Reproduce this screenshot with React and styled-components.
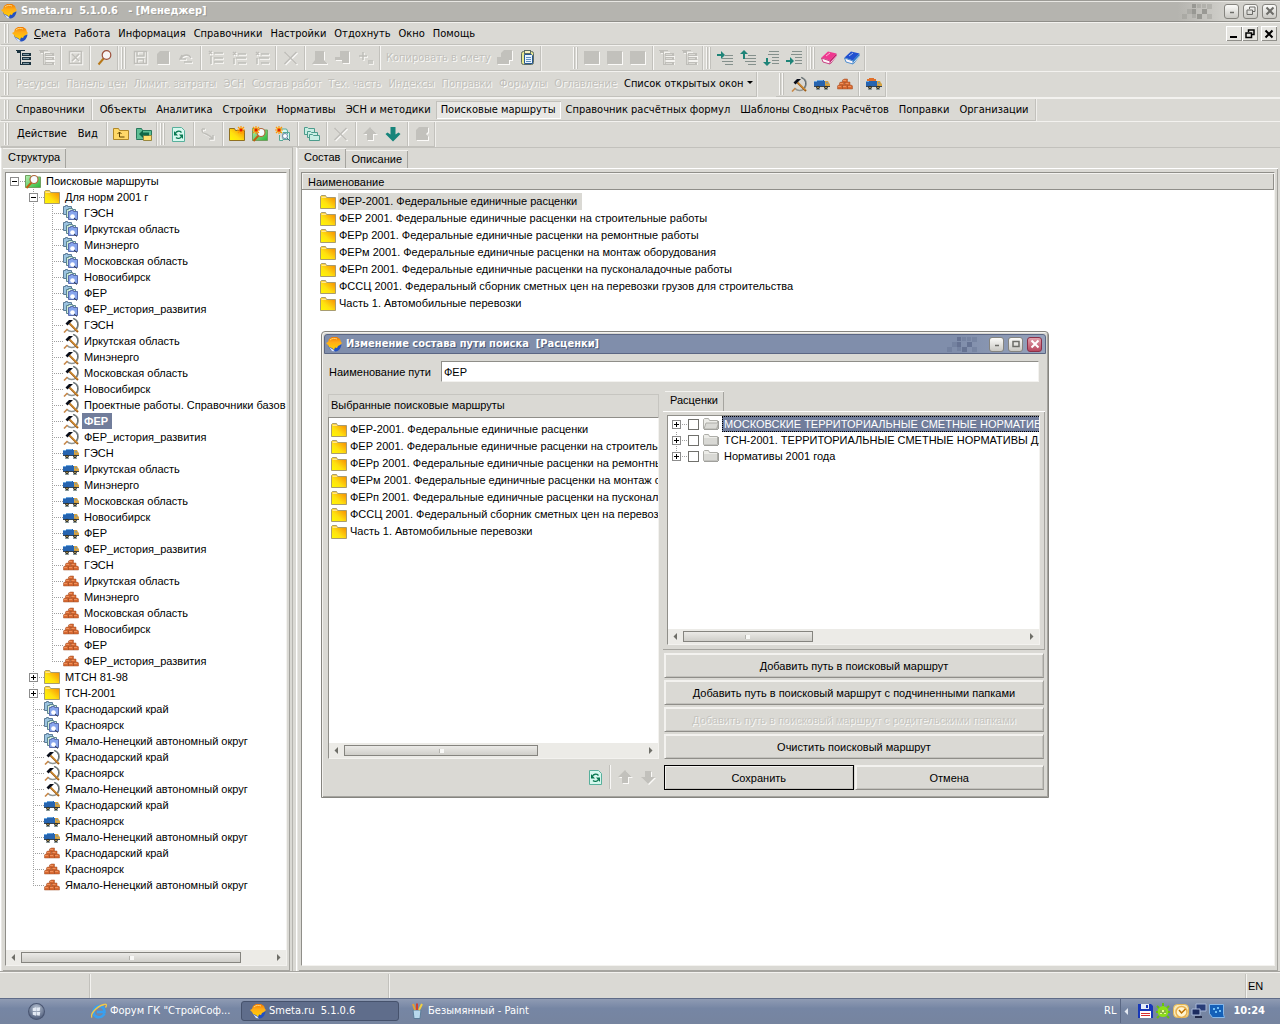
import React from "react";
import styled, { createGlobalStyle, css } from "styled-components";

const face = "#dad9d4";
const uiFont = '"DejaVu Sans Condensed", "DejaVu Sans", sans-serif';
const listFont = '"Liberation Sans", Arial, sans-serif';

const GlobalStyle = createGlobalStyle`
  * { box-sizing: border-box; }
  body { margin: 0; background: ${face}; font: 11px/16px ${uiFont}; color: #000; }
  button, input { font: inherit; color: inherit; margin: 0; padding: 0; }
  ul { list-style: none; margin: 0; padding: 0; }
  svg { display: block; flex: none; }
`;

/* ---------- drawings ---------- */

const Glyph = ({ size = 16, children }) => (
  <svg width={size} height={size} viewBox="0 0 16 16" aria-hidden="true">{children}</svg>
);

const Defs = () => (
  <HiddenSvg width="0" height="0" aria-hidden="true">
    <defs>
      <linearGradient id="gold" x1="0" y1="1" x2="1" y2="0">
        <stop offset="0" stopColor="#fffa00" /><stop offset="0.4" stopColor="#ffe010" /><stop offset="1" stopColor="#f48000" />
      </linearGradient>
      <linearGradient id="sun" x1="0" y1="0" x2="0" y2="1">
        <stop offset="0" stopColor="#f07800" /><stop offset="0.4" stopColor="#ffac18" /><stop offset="1" stopColor="#ffd400" />
      </linearGradient>
      <linearGradient id="green" x1="0" y1="0" x2="1" y2="1">
        <stop offset="0" stopColor="#b8eeb0" /><stop offset="1" stopColor="#28b838" />
      </linearGradient>
      <radialGradient id="orb" cx="0.5" cy="0.3" r="0.7">
        <stop offset="0" stopColor="#b9c4d4" /><stop offset="1" stopColor="#4c5a78" />
      </radialGradient>
    </defs>
  </HiddenSvg>
);

const Logo = () => (
  <Glyph>
    <path d="M2 9c1 4 4 6.500 7.500 6.500c3.500-.5 5.500-3.500 6-7z" fill="#2450c0" />
    <path d="M3 11l4 2.500 2 2-3-.5z" fill="#dce8ff" />
    <path d="M0 7l2-1 1-3 3-2h5l3 2 1 3 1 1-2 2-2 1-1 2-2-.5L8 14l-2-2-3-1-1-2z" fill="url(#sun)" />
    <path d="M4 4c2-2 5-2 7-1" stroke="#ffd878" fill="none" />
  </Glyph>
);
const Folder = () => (
  <Glyph>
    <path d="M0.500 14.500V2.500l1-1h4l1 2h9v11z" fill="url(#gold)" stroke="#a89c70" />
    <path d="M1.500 4V2.500h4L6.500 4z" fill="#ffe68c" />
  </Glyph>
);
const GreyFolder = ({ open }) => (
  <Glyph>
    <path d="M0.500 12.500V3.500l1-1h4l1 2h8v8z" fill="#ecece8" stroke="#aeaea9" />
    <path d={open ? "M3 7h12.500l-2 6H1z" : "M1 6h13v6.500H1z"} fill="#d9d9d5" stroke={open ? "#aeaea9" : "none"} />
    <path d="M1 13.500h14M15.500 5v8" stroke="#a0a09c" />
  </Glyph>
);
const Spark = ({ x, y }) => (
  <g stroke="#ff9a00" strokeWidth="1.200">
    <path d={`M${x - 4} ${y}h8M${x} ${y - 4}v8M${x - 3} ${y - 3}l6 6M${x + 3} ${y - 3}l-6 6`} />
    <circle cx={x} cy={y} r="1.500" fill="#e02000" stroke="none" />
  </g>
);
const SearchFolder = ({ spark }) => (
  <Glyph>
    <path d="M0.500 14.500V2.500h5l1 1.500h9v10.500z" fill="url(#green)" stroke="#70a060" />
    <path d="M6.500 9.500L1.500 15" stroke="#c06010" strokeWidth="2" />
    <circle cx="9" cy="6.500" r="4" fill="#f6fbff" stroke="#b0683a" strokeWidth="1.200" />
    {spark && <Spark x={4} y={4} />}
  </Glyph>
);
const Stack = () => (
  <Glyph>
    <path d="M0.500 9.500v-8h2v-1h2v1h4v8z" fill="#9cc4e0" stroke="#5c7c98" />
    <path d="M3.500 12.500v-8h2v-1h4v1h3v8z" fill="#d0ecd8" stroke="#5c8490" />
    <path d="M5.500 14.500v-8h2v-1h3v1h4v8z" fill="#86a4ec" stroke="#5a6cac" />
    <circle cx="9.500" cy="11.500" r="2.300" fill="#fff" />
    <path d="M11 13l3 2.500" stroke="#303848" />
  </Glyph>
);
const Hammer = () => (
  <Glyph>
    <path d="M10 1.500c4 1 5.500 4 5 7.500c-.6 4-4 5.500-6.500 5.500c-2 0-3.500-1-4.500-2" fill="none" stroke="#909694" strokeWidth="1.600" />
    <path d="M10.500 1.500c5 2 5 8 2 11" fill="none" stroke="#4c5860" strokeWidth="0.800" />
    <path d="M4.500 12L1 15.500" stroke="#c88848" strokeWidth="1.600" />
    <path d="M6.500 6.500L15 15" stroke="#a05c14" strokeWidth="2" />
    <path d="M6.500 6l8 8" stroke="#f4b850" strokeWidth="0.900" />
    <path d="M2.500 6.500L6 3h4L5.500 7.500l-1 1z" fill="#080c18" />
  </Glyph>
);
const Truck = ({ loaded }) => (
  <Glyph>
    <path d="M0 5h3v-1h7v1h1v5H0z" fill="#2664b0" />
    <path d="M0 5.500h3M3 4.500h6" stroke="#6ca8e0" />
    {loaded && <path d="M1 5V3h2V2h5v1h2v2z" fill="#e0702a" />}
    <path d="M11 10V5h3l1 2 1 1v3h-5z" fill="#d8a440" />
    <path d="M12 6h1.500l1 1.500H12z" fill="#7c98a8" />
    <path d="M0 10.500h16" stroke="#384450" />
    <path d="M2 13.500h4M10 13.500h4" stroke="#90a0a0" />
    <circle cx="4" cy="11.500" r="1.800" fill="#282828" /><circle cx="12" cy="11.500" r="1.800" fill="#282828" />
    <circle cx="4" cy="11.500" r="0.700" fill="#f0d060" /><circle cx="12" cy="11.500" r="0.700" fill="#f0d060" />
  </Glyph>
);
const Bricks = () => (
  <Glyph>
    <g fill="#d86830" stroke="#a05028" strokeWidth="0.500">
      <path d="M5.500 4l2-1h3v3l-1 1h-4z" />
      <path d="M2.500 7l1-1h4v4h-5zM8 7l1-1h4v4H8z" />
      <path d="M0.500 10l1-1h4v4h-5zM5.500 10l1-1h4v4h-5zM10.500 10l1-1h3l1 1v3h-5z" />
    </g>
    <path d="M6 4.500h3M3 7.500h3M8.500 7.500h3M1 10.500h3M6 10.500h3M11 10.500h3" stroke="#f49c68" strokeWidth="0.800" />
  </Glyph>
);
const Tree = ({ off }) => {
  const c = off ? "#bfbeb9" : "#1c3440";
  return (
    <Glyph>
      <g shapeRendering="crispEdges">
        {off && <path d="M2 2h9v2H2zM7 6h9v3H7zM7 10h9v2H7zM7 13h9v2H7z" fill="#f4f3f0" />}
        <path d="M0 0h9v1H5v13h2v1H4V3H1V1H0z" fill={c} />
        <path d="M6 3h9v3H6zM6 7h9v3H6zM6 12h9v3H6z" fill={c} />
        <path d="M7 4h6v1H7zM7 8h6v1H7zM7 13h6v1H7z" fill={off ? face : "#7e98a4"} />
      </g>
    </Glyph>
  );
};
const GreyShape = ({ d, line }) => (
  <Glyph>
    <g transform="translate(1 1)" fill={line ? "none" : "#fbfaf8"} stroke={line ? "#fbfaf8" : "none"} strokeWidth="1.500"><path d={d} /></g>
    <g fill={line ? "none" : "#c2c1bc"} stroke={line ? "#bfbeb9" : "none"} strokeWidth="1.500"><path d={d} /></g>
  </Glyph>
);
const grey = {
  excel: ["M1.500 1.500h12v12h-12zM4 4l7 7M11 4l-7 7", true],
  save: ["M1.500 1.500h12v12h-12zM4 2v4h7V2M4.500 13V9h6v4", true],
  doc: ["M1 4l3-3h9v13H1z"],
  undo: ["M3 5l-2 4h6M2 8c3-4 8-4 10 0M5 12h8", true],
  rows: ["M1 1l3 3M1 4l3-3M6 3h9M3 6v8M6 8h9M6 12h9", true],
  rows2: ["M2 2l3 3M2 5l3-3M7 4h8M5 8h10M3 8v6M7 13h8", true],
  cross: ["M1.500 2l12 12M13.500 2l-12 12", true],
  person: ["M3 1h9v9l3 3v1H0l3-4z"],
  person2: ["M5 1h9v12H7v-3H0V7h5z"],
  plusman: ["M5 2v8M1 6h8M10 11h5M10 13h5", true],
  copy: ["M0 7h4V3l3-3h8v10h-3v4H0z"],
  box: ["M0 1h15v13H0z"],
  up: ["M8 1l7 7h-4v6H5V8H1z"],
  down: ["M8 15l7-7h-4V2H5v6H1z"],
  link: ["M2 3c0 5 2 4 4 5s5 2 7 5M9 13h4V9M2 3h3", true],
  exit: ["M2 4l3-3h9v5l-2 2 2 2v4H2z"],
};
const Grey = ({ k }) => <GreyShape d={grey[k][0]} line={grey[k][1]} />;
const Magnifier = () => (
  <Glyph>
    <path d="M7 8L1.500 14.500" stroke="#b87818" strokeWidth="2" />
    <circle cx="9.500" cy="5" r="4.300" fill="#f7f4f4" stroke="#9c503c" strokeWidth="1.200" />
  </Glyph>
);
const Clipboard = () => (
  <Glyph>
    <rect x="1.500" y="1.500" width="12" height="13" rx="2" fill="#e8e890" stroke="#5c6c64" />
    <rect x="4.500" y="0.500" width="6" height="3" fill="#f4f0c0" stroke="#5c6c64" />
    <path d="M4.500 4.500h7l1 1v8h-8z" fill="#e8f4ff" stroke="#285890" />
    <path d="M6 7.500h5M6 9.500h5M6 11.500h5" stroke="#6090c0" />
  </Glyph>
);
const Indent = ({ mode }) => {
  const arrow = {
    right: "M0 4h4V1l4 4-4 4V6H0z", up: "M4 0l4 4H5v5H3V4H0z",
    down: "M4 16l-4-4h3V8h2v4h3z", low: "M0 10h4V7l4 4-4 4v-3H0z",
  }[mode];
  const upper = mode === "right" || mode === "up";
  return (
    <Glyph>
      <path d={upper ? "M8 5.500h8M5 8.500h11M5 11.500h11M8 14.500h8" : "M6 1.500h10M5 4.500h11M9 7.500h7M9 10.500h7M9 13.500h7"} stroke="#84908c" />
      <path d={arrow} fill="#1e8478" />
    </Glyph>
  );
};
const Book = ({ top, side }) => (
  <Glyph>
    <path d="M0.500 7.500L7 1.500l8.500 2L9 10.500z" fill={top} />
    <path d="M0.500 8L9 11v3L2 12z" fill="#fcf4f8" stroke={side} strokeWidth="0.800" />
    <path d="M9 10.500l6.500-7v3L9.500 14z" fill={side} />
    <path d="M9.500 12.500l6-6.500" stroke="#fff" strokeWidth="0.800" />
    <path d="M5 6l4-3" stroke="#fff" opacity="0.600" />
  </Glyph>
);
const UpFolder = () => (
  <Glyph>
    <path d="M0.500 13.500v-11h5l1 2h9v9z" fill="#ffd868" stroke="#b08828" />
    <path d="M6.500 6v5h5M4.500 8l2-2 2 2" stroke="#604400" fill="none" />
  </Glyph>
);
const TreeFolder = () => (
  <Glyph>
    <path d="M0.500 12.500v-10h5l1 2h9v9h-15z" fill="#5fbf94" stroke="#28785c" />
    <path d="M7.500 9.500h8v5h-8z" fill="#ffe070" stroke="#988840" />
    <path d="M3 8l4-4v2.500h6v3H7V12z" fill="#0e6848" />
  </Glyph>
);
const Refresh = () => (
  <Glyph>
    <path d="M1.500 1.500h9l3 3v11h-12z" fill="#d6f8ee" stroke="#58b09c" />
    <path d="M4.500 7c1-2 4-2.500 6-.5M10.500 10.500c-1 2-4 2.500-5.500 1" stroke="#087850" fill="none" strokeWidth="1.300" />
    <path d="M3 5v4.500h4zM12 13V8.500H8z" fill="#087850" />
  </Glyph>
);
const NewFolder = () => (
  <Glyph>
    <path d="M0.500 14.500v-12h5l1 2h9v10z" fill="url(#gold)" stroke="#907020" />
    <Spark x={12} y={4} />
  </Glyph>
);
const NewStack = () => (
  <Glyph>
    <path d="M5.500 7v-4h6l1 2v3M8 14.500H4.500V9M8 6.500h6.500v7H8z" fill="#d8f8f0" stroke="#58a898" />
    <circle cx="10" cy="10" r="2.500" fill="#fff" stroke="#6888a8" /><path d="M12 12l3 3" stroke="#506880" />
    <Spark x={4} y={4} />
  </Glyph>
);
const Copies = () => (
  <Glyph>
    <g fill="#c8eee4" stroke="#4c9c8c">
      <path d="M0.500 8.500v-7h3l1 1h6v6z" /><path d="M3.500 11.500v-6h3l1 1h6v5z" /><path d="M5.500 14.500v-6h3l1 1h6v5z" />
    </g>
  </Glyph>
);
const DownArrow = () => <Glyph><path d="M8 15.500L0.500 8l2-1.500 3 2V1h5v7.500l3-2 2 1.500z" fill="#17857b" /></Glyph>;
const Dissolve = ({ tint }) => (
  <svg width="33" height="15" viewBox="0 0 33 15" shapeRendering="crispEdges" aria-hidden="true">
    <g fill={tint}>
      <path opacity="0.800" d="M13 0h4v4h-4zM13 5h4v5h-4zM23 5h5v5h-5zM18 10h5v5h-5z" />
      <path opacity="0.350" d="M8 5h5v5H8zM3 10h5v5H3zM13 10h4v4h-4zM23 0h4v4h-4zM28 0h5v5h-5zM28 10h5v5h-5zM18 0h4v4h-4z" />
    </g>
  </svg>
);
const IE = () => (
  <Glyph>
    <path d="M13.500 10.500C12 14 8 15 5 13.500S1.500 7 4.500 4.500s9-1.500 9 4.500H6" fill="none" stroke="#38a0f0" strokeWidth="2.600" />
    <path d="M1 14.500C-1 12 4 4 13 1.500c3-1 3 1 1.500 3" fill="none" stroke="#f0c848" strokeWidth="1.300" />
  </Glyph>
);
const Orb = () => (
  <Glyph size={17}>
    <circle cx="8" cy="8" r="7.500" fill="url(#orb)" stroke="#4a5672" />
    <path d="M4.500 5l3-1v3.500h-3zM8 4.500l3.500-.5-.5 3.500H8zM4.500 8.500h3V12l-3-1zM8 8.500h3.500L11 12l-3-.5z" fill="#e4eaf4" />
  </Glyph>
);
const Paint = () => (
  <Glyph>
    <path d="M4 7h8l-1 8.500H5z" fill="#b8d8ec" stroke="#5c7c98" />
    <path d="M6 7L4 1" stroke="#e8a030" strokeWidth="2" /><path d="M8 7V0.500" stroke="#d04030" strokeWidth="2" /><path d="M10 7l3-6" stroke="#f0d040" strokeWidth="2" />
  </Glyph>
);
const Floppy = () => (
  <Glyph>
    <path d="M1 1h13l2 2v12H1z" fill="#1838b8" /><path d="M4 1h8v5H4z" fill="#e4ecf8" /><path d="M9 2h2v3H9z" fill="#1838b8" />
    <path d="M3 8h11v7H3z" fill="#fff" /><path d="M4 10h9v1H4zM4 12h9v1H4z" fill="#d83030" />
  </Glyph>
);
const Droid = () => (
  <Glyph>
    <circle cx="8" cy="8.500" r="5.500" fill="#8ce018" /><path d="M8 0v3M2 3l2 2M14 3l-2 2M1 9h2M13 9h2M4 13l-2 2M12 13l2 2" stroke="#68c010" strokeWidth="2" />
    <path d="M5 7h6v4H5z" fill="#e8ff90" /><path d="M6 7v3M10 7v3M8 9v2" stroke="#306800" />
  </Glyph>
);
const Clock = () => (
  <Glyph>
    <rect x="0.500" y="1.500" width="15" height="13" rx="4" fill="#f8e8b8" stroke="#e8b850" /><circle cx="8.500" cy="9" r="5.500" fill="#fff4d0" stroke="#e8b050" strokeWidth="1.500" />
    <path d="M6 7l2.500 3 4-4" stroke="#c07000" fill="none" strokeWidth="1.500" />
  </Glyph>
);
const Network = () => (
  <Glyph>
    <path d="M5 1h10v7H5z" fill="#283c78" stroke="#a8b8d8" /><path d="M1 6h8v6H1z" fill="#1c2c60" stroke="#a8b8d8" /><path d="M4 14h7" stroke="#202848" strokeWidth="2" />
  </Glyph>
);
const Chip = () => (
  <Glyph>
    <path d="M0.500 1.500h14v10l1 3h-12l-3-4z" fill="#1460b8" stroke="#88b8e8" />
    <path d="M4 5h2v2H4zM8 4h2v2H8zM6 8h2v2H6zM10 7h2v2h-2z" fill="#70c0f8" />
  </Glyph>
);
const WinMark = ({ kind, tint = "#6c6c68", bold }) => (
  <svg width="10" height="10" viewBox="0 0 10 10" aria-hidden="true" fill="none" stroke={tint} strokeWidth={bold ? 2 : 1.500}>
    {kind === "min" && <path d={bold ? "M1 8h7" : "M3 6.500h4"} />}
    {kind === "max" && <path d="M2 2.500h6v5H2z" />}
    {kind === "restore" && <path d="M3.500 3V1h5.500v4.500H7M1 4h5.500v4.500H1z" strokeWidth={bold ? 1.500 : 1} />}
    {kind === "close" && <path d="M1.500 1.500l7 7M8.500 1.500l-7 7" strokeWidth="2" />}
  </svg>
);
const Caret = ({ dir, tint = "#6e6e68" }) => (
  <svg width="5" height="7" viewBox="0 0 5 7" aria-hidden="true">
    <path d={dir === "left" ? "M4 0v7L0.500 3.500z" : "M1 0v7l3.500-3.500z"} fill={tint} />
  </svg>
);

/* ---------- shell ---------- */

const HiddenSvg = styled.svg`position: absolute;`;
const Screen = styled.div`display: flex; flex-direction: column; min-height: 100vh; background: ${face};`;
const TitleBar = styled.header`
  display: flex; align-items: center; height: 22px; padding: 0 3px 0 1px; gap: 4px;
  background: linear-gradient(to right, #b5b4af 92%, #d2d1cc 96%);
  border-top: 1px solid #9c9b96; border-bottom: 1px solid #8f8e89; box-shadow: inset 0 1px #e8e7e3;
`;
const TitleText = styled.h1`
  flex: 1; margin: 0; font: bold 11px/16px ${uiFont}; color: #fff; white-space: pre;
  text-shadow: 1px 1px ${(p) => p.$shade || "#9a9994"};
`;
const TitleGap = styled.span`width: 4px;`;
const WindowButton = styled.button`
  display: flex; align-items: center; justify-content: center; width: 15px; height: 15px;
  border: 1px solid ${(p) => (p.$danger ? "#8c3048" : "#85847f")}; border-radius: 3px;
  background: ${(p) => (p.$danger ? "linear-gradient(#e0a0ac, #b84860)" : "linear-gradient(#fbfbf9, #c9c8c3)")};
`;
const Strip = styled.div`
  display: flex; height: ${(p) => p.$h}px; padding-left: 1px;
  border-top: ${(p) => (p.$edge ? 2 : 1)}px solid #f3f2ef;
`;
const Group = styled.div`
  display: flex; align-items: center; padding-right: ${(p) => p.$pad || 0}px; margin-left: ${(p) => p.$gap || 0}px;
  gap: ${(p) => p.$space || 0}px;
  border-right: ${(p) => (p.$open ? "none" : "1px solid #c2c1bc")}; border-bottom: 1px solid #c2c1bc;
  box-shadow: 1px 0 ${(p) => (p.$open ? "transparent" : "#f0efec")};
  flex: ${(p) => (p.$open ? "1" : "none")};
`;
const Grip = styled.span`
  align-self: stretch; width: 5px; margin: 1px 3px; flex: none;
  background: linear-gradient(to right, #f8f7f5 0 1px, #c2c1bc 1px 2px, transparent 2px 3px, #f8f7f5 3px 4px, #c2c1bc 4px 5px);
`;
const Sep = styled.span`
  width: 2px; margin: 0 2px; align-self: stretch; flex: none;
  background: linear-gradient(to right, #c2c1bc 50%, #f8f7f5 50%);
`;
const IconButton = styled.button`
  display: flex; align-items: center; justify-content: center; width: 23px; height: 22px; border: 0; background: none;
`;
const TextButton = styled.button`
  height: 18px; padding: 0 ${(p) => p.$pad}px; border: 0; background: none; white-space: nowrap; line-height: 16px;
  &:disabled { color: #c0bfba; text-shadow: 1px 1px #fafaf8; }
  ${(p) => p.$active && css`background: #e9e8e5; box-shadow: inset 1px 1px #c2c1bc, inset -1px -1px #fff;`}
`;
const Chevron = styled.span`
  display: inline-block; margin-left: 4px; vertical-align: 3px;
  border: 3px solid transparent; border-top-color: #000; border-bottom-width: 0;
`;
const MenuIcon = styled.span`margin-right: 2px;`;
const MdiButton = styled.button`
  display: flex; align-items: center; justify-content: center; width: 16px; height: 15px; border: 0; background: #e6e5e1;
  box-shadow: inset 1px 1px #fff, inset -1px -1px #8f8e89;
  & + &:last-child { margin-left: 3px; }
`;
const MdiButtons = styled.div`display: flex; margin: 0 3px 0 auto;`;

const Body = styled.main`display: flex; flex: 1; gap: 3px; min-height: 0;`;
const Pane = styled.section`
  display: flex; flex-direction: column; min-width: 0; padding: 0 2px;
  border-top: 1px solid #c2c1bc; border-left: 1px solid #fff; box-shadow: inset 1px 0 #e8e7e4;
  ${(p) => (p.$side ? "width: 293px; flex: none; border-right: 1px solid #b5b4af;" : "flex: 1;")}
`;
const Tabs = styled.div`display: flex; align-items: flex-end;`;
const Tab = styled.button`
  height: ${(p) => (p.$on ? 20 : 18)}px; padding: 0 6px ${(p) => (p.$on ? 2 : 0)}px 5px; border: 0; background: ${face};
  font: 11px/16px ${listFont};
  box-shadow: inset 0 1px #f3f2ef, inset -1px 0 #a5a49f;
`;
const TabBody = styled.div`
  display: flex; flex: 1; flex-direction: column; min-height: 0;
  padding: ${(p) => (p.$roomy ? "4px 5px 5px 4px" : "4px 3px 5px 2px")};
  box-shadow: inset 0 1px #fff, inset -1px -1px #a5a49f;
`;
const Well = styled.div`
  display: flex; flex: 1; flex-direction: column; min-height: 0; overflow: hidden; background: #fff;
  border: 1px solid #8f8e89; border-right-color: #f3f2ef; border-bottom-color: #f3f2ef;
`;
const Grow = styled.div`flex: 1; min-height: 0; overflow: hidden;`;

const ScrollRow = styled.div`display: flex; height: 15px; background: #ecebe7; align-items: center;`;
const ScrollArrow = styled.button`
  display: flex; align-items: center; justify-content: center; width: 15px; height: 15px; border: 0; background: none;
`;
const Track = styled.div`flex: 1; display: flex;`;
const Thumb = styled.div`
  width: ${(p) => p.$size}%; height: 11px; display: flex; align-items: center; justify-content: center;
  border: 1px solid #85847f; background: linear-gradient(#ebeae7, #cfcec9);
  &::after { content: ""; width: 4px; height: 4px; background: #f8f8f6; border-left: 1px solid #b5b4af; }
`;
const ScrollBar = ({ size }) => (
  <ScrollRow>
    <ScrollArrow aria-label="Влево"><Caret dir="left" /></ScrollArrow>
    <Track><Thumb $size={size} /></Track>
    <ScrollArrow aria-label="Вправо"><Caret dir="right" /></ScrollArrow>
  </ScrollRow>
);

/* ---------- tree ---------- */

const dotsV = "repeating-linear-gradient(to bottom, #a0a0a0 0 1px, transparent 1px 2px)";
const dotsH = "repeating-linear-gradient(to right, #a0a0a0 0 1px, transparent 1px 2px)";
const TreeRow = styled.li`
  display: flex; align-items: center; height: 16px; white-space: nowrap; font-family: ${listFont};
`;
const guide = {
  blank: "background: none;",
  line: `background: ${dotsV} 8px 0 / 1px 100% no-repeat;`,
  tee: `background: ${dotsV} 8px 0 / 1px 100% no-repeat, ${dotsH} 8px 8px / 11px 1px no-repeat;`,
  end: `background: ${dotsV} 8px 0 / 1px 8px no-repeat, ${dotsH} 8px 8px / 11px 1px no-repeat;`,
  stub: `background: ${dotsH} 8px 8px / 11px 1px no-repeat;`,
};
const Guide = styled.span`display: flex; align-items: center; width: 19px; height: 16px; padding-left: 4px; flex: none; ${(p) => guide[p.$kind]}`;
const Toggle = styled.button`
  width: 9px; height: 9px; border: 1px solid #8c8c8c;
  background: linear-gradient(#000, #000) 1px 3px / 5px 1px no-repeat,
    ${(p) => (p.$open ? "" : "linear-gradient(#000, #000) 3px 1px / 1px 5px no-repeat,")} #fff;
`;
const TreeLabel = styled.span`
  margin-left: 3px; padding: 0 2px; line-height: 16px;
  ${(p) => p.$selected && "padding-right: 4px; background: #717d9b; color: #fff; font-weight: bold;"}
  ${(p) => p.$focused && "background: #717d9b; color: #fff; outline: 1px dotted #000; outline-offset: -1px;"}
`;

const icons = { folder: Folder, root: SearchFolder, stack: Stack, hammer: Hammer, truck: Truck, bricks: Bricks };
const regions = ["ГЭСН", "Иркутская область", "Минэнерго", "Московская область", "Новосибирск", "ФЕР", "ФЕР_история_развития"];
const outer = ["Краснодарский край", "Красноярск", "Ямало-Ненецкий автономный округ"];
const kinds = ["stack", "hammer", "truck", "bricks"];

const inner = kinds.flatMap((icon) => {
  const names = icon === "hammer" ? [...regions.slice(0, 5), "Проектные работы. Справочники базов", ...regions.slice(5)] : regions;
  return names.map((text) => ({ icon, text, guides: ["blank", "line", "tee"], selected: icon === "hammer" && text === "ФЕР" }));
});
inner[inner.length - 1].guides = ["blank", "line", "end"];
const tail = kinds.flatMap((icon) => outer.map((text) => ({ icon, text, guides: ["blank", "tee"] })));
tail[tail.length - 1].guides = ["blank", "end"];

const treeRows = [
  { icon: "root", text: "Поисковые маршруты", guides: ["stub"], toggle: "open" },
  { icon: "folder", text: "Для норм 2001 г", guides: ["blank", "tee"], toggle: "open" },
  ...inner,
  { icon: "folder", text: "МТСН 81-98", guides: ["blank", "tee"], toggle: "closed" },
  { icon: "folder", text: "ТСН-2001", guides: ["blank", "tee"], toggle: "closed" },
  ...tail,
];

const Node = ({ row }) => {
  const Icon = icons[row.icon];
  return (
    <TreeRow>
      {row.guides.map((kind, i) => (
        <Guide key={i} $kind={kind}>
          {row.toggle && i === row.guides.length - 1 && <Toggle $open={row.toggle === "open"} aria-label={row.text} />}
        </Guide>
      ))}
      <Icon />
      <TreeLabel $selected={row.selected}>{row.text}</TreeLabel>
    </TreeRow>
  );
};

/* ---------- lists ---------- */

const ColumnHead = styled.div`
  height: 17px; padding-left: 6px; background: ${face}; font: 11px/18px ${listFont}; white-space: nowrap;
  border-bottom: 1px solid #8f8e89; box-shadow: inset 1px 1px #f3f2ef, inset -1px 0 #8f8e89;
`;
const Rows = styled.ul`padding: 3px 0 0 ${(p) => p.$inset}px;`;
const ListRow = styled.li`display: flex; align-items: center; gap: 2px; height: 17px; white-space: nowrap; font-family: ${listFont};`;
const RowText = styled.span`
  padding: 0 5px 0 1px; line-height: 17px; ${(p) => p.$marked && `background: ${face};`}
`;
const routes = [
  "ФЕР-2001. Федеральные единичные расценки",
  "ФЕР 2001. Федеральные единичные расценки на строительные работы",
  "ФЕРр 2001. Федеральные единичные расценки на ремонтные работы",
  "ФЕРм 2001. Федеральные единичные расценки на монтаж оборудования",
  "ФЕРп 2001. Федеральные единичные расценки на пусконаладочные работы",
  "ФССЦ 2001. Федеральный сборник сметных цен на перевозки грузов для строительства",
  "Часть 1. Автомобильные перевозки",
];
const RouteList = ({ inset, mark }) => (
  <Rows $inset={inset}>
    {routes.map((text, i) => (
      <ListRow key={text}><Folder /><RowText $marked={mark && i === 0}>{text}</RowText></ListRow>
    ))}
  </Rows>
);

/* ---------- dialog ---------- */

const Dialog = styled.section`
  position: absolute; left: 321px; top: 331px; width: 728px; height: 467px; display: flex; flex-direction: column;
  padding: 2px; background: ${face}; border: 1px solid #85847f; border-radius: 4px 4px 0 0;
  box-shadow: inset 1px 1px #f3f2ef, inset -1px -1px #a5a49f; font-family: ${listFont};
`;
const DialogTitle = styled.header`
  display: flex; align-items: center; gap: 4px; height: 20px; padding: 0 3px 0 1px; border: 1px solid #5b6683; border-radius: 3px 3px 0 0;
  background: linear-gradient(to right, #808eab 88%, #96a2bb);
`;
const NameRow = styled.label`display: flex; align-items: center; height: 21px; margin: 7px 7px 0 5px; gap: 10px; white-space: nowrap;`;
const NameInput = styled.input`
  flex: 1; height: 21px; padding: 0 2px; background: #fff; line-height: 16px;
  border: 1px solid #8f8e89; border-right-color: #f3f2ef; border-bottom-color: #f3f2ef; border-radius: 0;
`;
const Columns = styled.div`display: flex; flex: 1; min-height: 0; margin: 9px 1px 4px 4px; gap: 4px;`;
const LeftColumn = styled.div`display: flex; flex-direction: column; width: 331px; padding-top: 3px;`;
const RightColumn = styled.div`display: flex; flex-direction: column; flex: 1; min-width: 0;`;
const PanelHead = styled.div`height: 23px; padding-left: 3px; line-height: 22px; box-shadow: inset 1px 1px #c6c5c0, inset -1px 0 #c6c5c0;`;
const LeftTools = styled.div`display: flex; align-items: center; justify-content: flex-end; height: 32px; padding-top: 3px;`;
const ToolSep = styled.span`width: 2px; height: 24px; margin: 0 2px; background: linear-gradient(to right, #c2c1bc 50%, #f8f7f5 50%);`;
const DialogTabs = styled.div`display: flex; flex-direction: column; height: 259px;`;
const TabShift = styled.div`padding-left: 2px;`;
const Check = styled.input`
  appearance: none; width: 11px; height: 11px; border: 1px solid #70706c; background: #fff; flex: none; border-radius: 0;
`;
const CheckRow = styled.label`display: flex; align-items: center;`;
const CheckCell = styled.span`display: flex; width: 16px; padding-left: 1px;`;
const Stackable = styled.div`display: flex; flex-direction: column; gap: 2px; padding: 3px 1px 6px;`;
const Pair = styled.div`display: grid; grid-template-columns: 1fr 1fr; gap: 1px; padding: 0 1px;`;
const PushButton = styled.button`
  height: 25px; border: 1px solid ${(p) => (p.$primary ? "#000" : "#f3f2ef")}; background: ${face}; line-height: 16px;
  ${(p) => !p.$primary && "border-right-color: #a5a49f; border-bottom-color: #8f8e89;"}
  box-shadow: inset 1px 1px #f3f2ef, inset -1px -1px #c2c1bc;
  &:disabled { color: #c6c5c0; text-shadow: 1px 1px #f8f8f6; }
`;
const prices = [
  "МОСКОВСКИЕ ТЕРРИТОРИАЛЬНЫЕ СМЕТНЫЕ НОРМАТИВЫ",
  "ТСН-2001. ТЕРРИТОРИАЛЬНЫЕ СМЕТНЫЕ НОРМАТИВЫ ДЛЯ",
  "Нормативы 2001 года",
];

const EditDialog = () => (
  <Dialog role="dialog" aria-label="Изменение состава пути поиска">
    <DialogTitle>
      <Logo />
      <TitleText as="h2" $shade="#4a5674">Изменение состава пути поиска  [Расценки]</TitleText>
      <Dissolve tint="#5f6c8c" />
      <TitleGap />
      <WindowButton aria-label="Свернуть"><WinMark kind="min" /></WindowButton>
      <WindowButton aria-label="Развернуть"><WinMark kind="max" /></WindowButton>
      <WindowButton $danger aria-label="Закрыть"><WinMark kind="close" tint="#fff" /></WindowButton>
    </DialogTitle>
    <NameRow>Наименование пути<NameInput type="text" defaultValue="ФЕР" /></NameRow>
    <Columns>
      <LeftColumn>
        <PanelHead>Выбранные поисковые маршруты</PanelHead>
        <Well>
          <Grow><RouteList inset={2} /></Grow>
          <ScrollBar size={65} />
        </Well>
        <LeftTools>
          <IconButton aria-label="Обновить"><Refresh /></IconButton>
          <ToolSep />
          <IconButton disabled aria-label="Вверх"><Grey k="up" /></IconButton>
          <IconButton disabled aria-label="Вниз"><Grey k="down" /></IconButton>
        </LeftTools>
      </LeftColumn>
      <RightColumn>
        <DialogTabs>
          <TabShift><Tabs><Tab $on>Расценки</Tab></Tabs></TabShift>
          <TabBody $roomy>
            <Well>
              <Grow>
                <ul>
                  {prices.map((text, i) => (
                    <TreeRow key={text}>
                      <Guide $kind={i === 2 ? "end" : i === 0 ? "stub" : "tee"}><Toggle aria-label={text} /></Guide>
                      <CheckRow>
                        <CheckCell><Check type="checkbox" /></CheckCell>
                        <GreyFolder open={i === 0} />
                        <TreeLabel $focused={i === 0}>{text}</TreeLabel>
                      </CheckRow>
                    </TreeRow>
                  ))}
                </ul>
              </Grow>
              <ScrollBar size={38} />
            </Well>
          </TabBody>
        </DialogTabs>
        <Stackable>
          <PushButton>Добавить путь в поисковый маршрут</PushButton>
          <PushButton>Добавить путь в поисковый маршрут с подчиненными папками</PushButton>
          <PushButton disabled>Добавить путь в поисковый маршрут с родительскими папками</PushButton>
          <PushButton>Очистить поисковый маршрут</PushButton>
        </Stackable>
        <Pair>
          <PushButton $primary>Сохранить</PushButton>
          <PushButton>Отмена</PushButton>
        </Pair>
      </RightColumn>
    </Columns>
  </Dialog>
);

/* ---------- bottom bars ---------- */

const StatusBar = styled.footer`
  display: flex; height: 27px; border-top: 1px solid #a5a49f; box-shadow: inset 0 1px #f3f2ef; padding-top: 2px; font-family: ${listFont};
`;
const StatusCell = styled.span`
  width: ${(p) => p.$w}px; flex: ${(p) => (p.$w ? "none" : 1)}; border-right: 1px solid #c2c1bc; box-shadow: 1px 0 #f3f2ef;
`;
const Lang = styled.span`width: 34px; padding-left: 2px; line-height: 24px;`;
const TaskBar = styled.nav`
  display: flex; align-items: center; height: 26px; color: #fff;
  background: linear-gradient(#5f6c88 0 1px, #8f9bb3 1px, #7686a4 40%, #76849f);
`;
const StartButton = styled.button`display: flex; justify-content: center; width: 73px; border: 0; background: none;`;
const Task = styled.button`
  display: flex; align-items: center; gap: 3px; width: 158px; height: 20px; margin-left: 5px; padding: 0 ${(p) => p.$pad}px; white-space: pre;
  border: 1px solid ${(p) => (p.$active ? "#46526c" : "transparent")}; border-radius: 3px;
  background: ${(p) => (p.$active ? "#5f6d8b" : "none")};
`;
const Tray = styled.div`display: flex; align-items: center; gap: 2px; margin-left: auto; padding-right: 15px;`;
const TrayLang = styled.span`padding-right: 2px;`;
const TrayFold = styled.span`display: flex; align-items: center; height: 24px; padding: 0 6px 0 3px; border-left: 1px solid #5b6884;`;
const Time = styled.time`padding-left: 6px; font-weight: bold;`;

/* ---------- content tables ---------- */

const menu = ["Работа", "Информация", "Справочники", "Настройки", "Отдохнуть", "Окно", "Помощь"];
const blocked = ["Ресурсы", "Панель цен", "Лимит. затраты", "ЭСН", "Состав работ", "Тех. часть", "Индексы", "Поправки", "Формулы", "Оглавление"];
const sections = ["Объекты", "Аналитика", "Стройки", "Нормативы", "ЭСН и методики", "Поисковые маршруты", "Справочник расчётных формул", "Шаблоны Сводных Расчётов", "Поправки", "Организации"];

const Tool = ({ children, off, name }) => <IconButton disabled={off} aria-label={name}>{children}</IconButton>;
const Off = ({ k }) => <Tool off name={k}><Grey k={k} /></Tool>;

export default function App() {
  return (
    <Screen>
      <GlobalStyle />
      <Defs />
      <TitleBar>
        <Logo />
        <TitleText>Smeta.ru  5.1.0.6   - [Менеджер]</TitleText>
        <Dissolve tint="#8f8e89" />
        <TitleGap />
        <WindowButton aria-label="Свернуть"><WinMark kind="min" /></WindowButton>
        <WindowButton aria-label="Восстановить"><WinMark kind="restore" /></WindowButton>
        <WindowButton aria-label="Закрыть"><WinMark kind="close" /></WindowButton>
      </TitleBar>
      <Strip $h={23}>
        <Group $open>
          <Grip />
          <MenuIcon><Logo /></MenuIcon>
          <TextButton $pad={4}><u>С</u>мета</TextButton>
          {menu.map((m) => <TextButton key={m} $pad={4}>{m}</TextButton>)}
          <MdiButtons>
            <MdiButton aria-label="Свернуть"><WinMark kind="min" tint="#000" bold /></MdiButton>
            <MdiButton aria-label="Восстановить"><WinMark kind="restore" tint="#000" bold /></MdiButton>
            <MdiButton aria-label="Закрыть"><WinMark kind="close" tint="#000" /></MdiButton>
          </MdiButtons>
        </Group>
      </Strip>
      <Strip $h={26}>
        <Group $pad={1}>
          <Grip />
          <Tool name="Структура"><Tree /></Tool><Tool off name="Ветвь"><Tree off /></Tool><Sep />
          <Off k="excel" /><Sep />
          <Tool name="Поиск"><Magnifier /></Tool>
        </Group>
        <Group>
          <Grip />
          <Off k="save" /><Off k="doc" /><Off k="undo" /><Sep />
          <Off k="rows" /><Off k="rows2" /><Off k="rows2" /><Sep />
          <Off k="cross" /><Sep />
          <Off k="person" /><Off k="person2" /><Off k="plusman" /><Sep />
          <TextButton $pad={3} disabled>Копировать в смету</TextButton>
          <Off k="copy" /><Tool name="Вставить"><Clipboard /></Tool>
        </Group>
        <Group $gap={29}>
          <Grip />
          <Off k="box" /><Off k="box" /><Off k="box" /><Sep />
          <Tool off name="Свернуть ветвь"><Tree off /></Tool><Tool off name="Развернуть ветвь"><Tree off /></Tool>
        </Group>
        <Group>
          <Grip />
          <Tool name="Вправо"><Indent mode="right" /></Tool><Tool name="Выше"><Indent mode="up" /></Tool>
          <Tool name="Ниже"><Indent mode="down" /></Tool><Tool name="Вложить"><Indent mode="low" /></Tool>
        </Group>
        <Group>
          <Grip />
          <Tool name="Красная книга"><Book top="#f03890" side="#c01868" /></Tool>
          <Tool name="Синяя книга"><Book top="#2050d0" side="#2878c8" /></Tool>
        </Group>
      </Strip>
      <Strip $h={26}>
        <Group $space={1}>
          <Grip />
          {blocked.map((b) => <TextButton key={b} $pad={3} disabled>{b}</TextButton>)}
          <TextButton $pad={3}>Список открытых окон<Chevron /></TextButton>
        </Group>
        <Group $gap={19}>
          <Grip />
          <Tool name="Работы"><Hammer /></Tool><Tool name="Машины"><Truck /></Tool><Tool name="Материалы"><Bricks /></Tool><Sep />
          <Tool name="Перевозка"><Truck loaded /></Tool>
        </Group>
      </Strip>
      <Strip $h={24} $edge>
        <Group $pad={1}>
          <Grip />
          <TextButton $pad={4}>Справочники</TextButton><Sep />
          {sections.map((s) => <TextButton key={s} $pad={5} $active={s === "Поисковые маршруты"}>{s}</TextButton>)}
        </Group>
      </Strip>
      <Strip $h={26}>
        <Group>
          <Grip />
          <TextButton $pad={5}>Действие</TextButton><TextButton $pad={6}>Вид</TextButton><Sep />
          <Tool name="Вверх"><UpFolder /></Tool><Tool name="К структуре"><TreeFolder /></Tool>
        </Group>
        <Group>
          <Grip />
          <Tool name="Обновить"><Refresh /></Tool><Sep />
          <Off k="link" /><Sep />
          <Tool name="Новая папка"><NewFolder /></Tool><Tool name="Новый поиск"><SearchFolder spark /></Tool><Tool name="Новый маршрут"><NewStack /></Tool><Sep />
          <Tool name="Копии"><Copies /></Tool><Sep />
          <Off k="cross" /><Sep />
          <Off k="up" /><Tool name="Вниз"><DownArrow /></Tool><Sep />
          <Off k="exit" />
        </Group>
      </Strip>
      <Body>
        <Pane $side>
          <Tabs><Tab $on>Структура</Tab></Tabs>
          <TabBody>
            <Well>
              <Grow><ul>{treeRows.map((row, i) => <Node key={i} row={row} />)}</ul></Grow>
              <ScrollBar size={88} />
            </Well>
          </TabBody>
        </Pane>
        <Pane>
          <Tabs><Tab $on>Состав</Tab><Tab>Описание</Tab></Tabs>
          <TabBody>
            <Well>
              <ColumnHead>Наименование</ColumnHead>
              <Grow><RouteList inset={18} mark /></Grow>
            </Well>
          </TabBody>
        </Pane>
      </Body>
      <StatusBar>
        <StatusCell $w={90} /><StatusCell $w={299} /><StatusCell />
        <Lang>EN</Lang>
      </StatusBar>
      <TaskBar>
        <StartButton aria-label="Пуск"><Orb /></StartButton>
        <Task $pad={12}><IE />Форум ГК "СтройСоф...</Task>
        <Task $pad={8} $active><Logo />Smeta.ru  5.1.0.6</Task>
        <Task $pad={4}><Paint />Безымянный - Paint</Task>
        <Tray>
          <TrayLang>RL</TrayLang>
          <TrayFold><Caret dir="left" tint="#e4e9f2" /></TrayFold>
          <Floppy /><Droid /><Clock /><Network /><Chip />
          <Time>10:24</Time>
        </Tray>
      </TaskBar>
      <EditDialog />
    </Screen>
  );
}
